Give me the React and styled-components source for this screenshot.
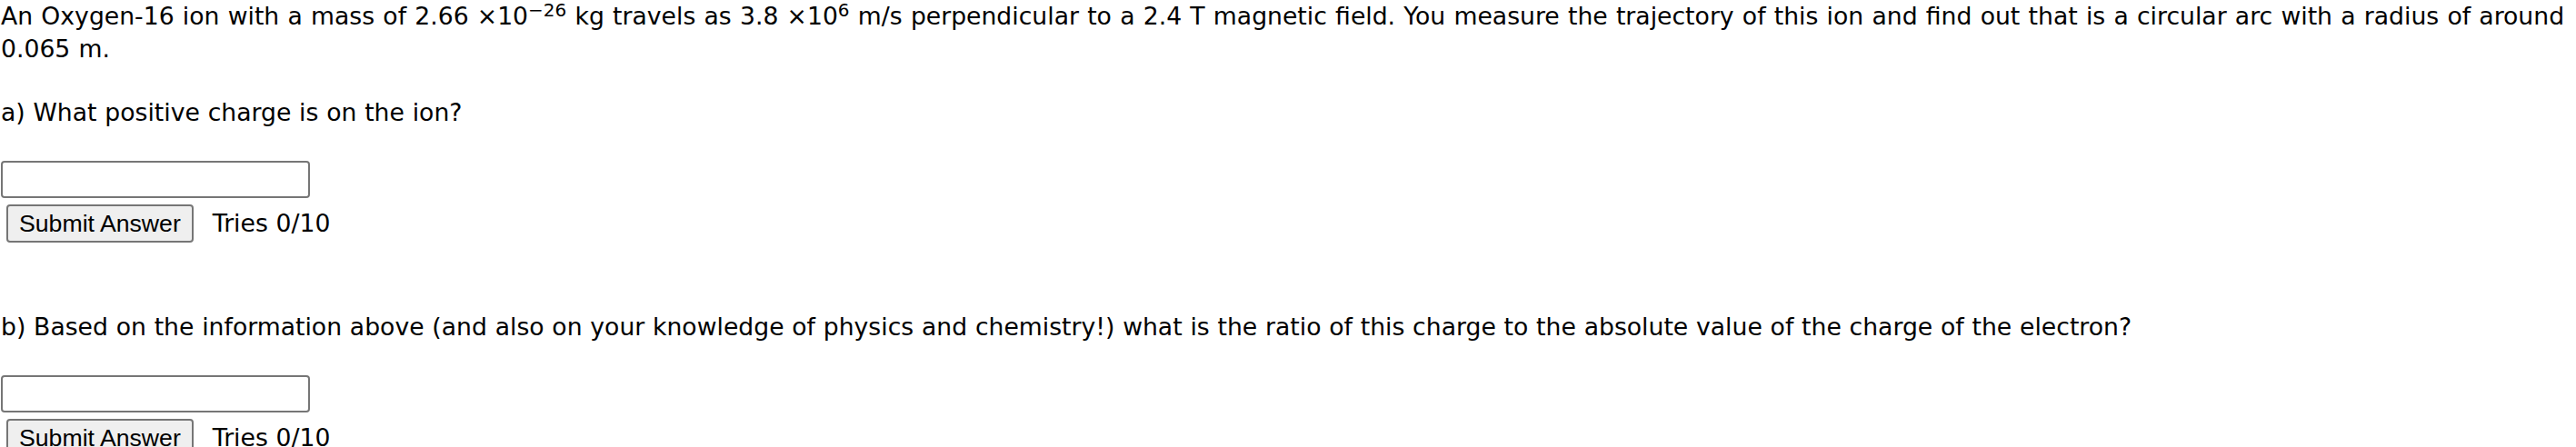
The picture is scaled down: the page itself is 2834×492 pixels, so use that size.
import React from "react";
import styled, { createGlobalStyle } from "styled-components";

const GlobalStyle = createGlobalStyle`
  html, body {
    margin: 0;
    padding: 0;
    background: #ffffff;
  }
  body {
    font-family: "DejaVu Sans", Verdana, sans-serif;
    color: #000000;
  }
`;

const Page = styled.div`
  display: flex;
  flex-direction: column;
  align-items: flex-start;
  padding: 0 0 0 1px;
  font-family: "DejaVu Sans", Verdana, sans-serif;
  font-size: 26.67px;
  line-height: 36px;
  word-spacing: 0.3px;
  color: #000;
`;

const Problem = styled.p`
  margin: 0;
  max-width: 2830px;
  word-spacing: 0.75px;
`;

const Sup = styled.sup`
  font-size: 20px;
  line-height: 0;
  vertical-align: 9px;
`;

const Question = styled.div`
  margin-top: ${(p) => p.$gap}px;
  white-space: nowrap;
`;

const AnswerInput = styled.input`
  box-sizing: border-box;
  width: 340px;
  height: 41px;
  margin: 35px 0 0 0;
  padding: 2px 4px;
  border: 2px solid #767676;
  border-radius: 4px;
  background: #fff;
  font-family: "Liberation Sans", Arial, sans-serif;
  font-size: 26.67px;
  outline: none;
`;

const SubmitRow = styled.div`
  display: flex;
  align-items: baseline;
  gap: 21px;
  margin-top: 7px;
  padding-left: 6px;
`;

const SubmitButton = styled.button`
  box-sizing: border-box;
  height: 42px;
  margin: 0;
  padding: 0 12px;
  border: 2px solid #767676;
  border-radius: 4px;
  background: #efefef;
  color: #000;
  font-family: "Liberation Sans", Arial, sans-serif;
  font-size: 26.67px;
  line-height: normal;
  white-space: nowrap;
  cursor: pointer;
`;

const Tries = styled.span`
  white-space: nowrap;
`;

function Part({ label, gap }) {
  return (
    <>
      <Question $gap={gap}>{label}</Question>
      <AnswerInput type="text" aria-label="answer" />
      <SubmitRow>
        <SubmitButton type="button">Submit Answer</SubmitButton>
        <Tries>Tries 0/10</Tries>
      </SubmitRow>
    </>
  );
}

export default function App() {
  return (
    <>
      <GlobalStyle />
      <Page>
        <Problem>
          An Oxygen-16 ion with a mass of 2.66 ×10<Sup>−26</Sup> kg travels as 3.8 ×10
          <Sup>6</Sup> m/s perpendicular to a 2.4 T magnetic field. You measure the trajectory of
          this ion and find out that is a circular arc with a radius of around 0.065 m.
        </Problem>
        <Part label="a) What positive charge is on the ion?" gap={34} />
        <Part
          label="b) Based on the information above (and also on your knowledge of physics and chemistry!) what is the ratio of this charge to the absolute value of the charge of the electron?"
          gap={75}
        />
      </Page>
    </>
  );
}
